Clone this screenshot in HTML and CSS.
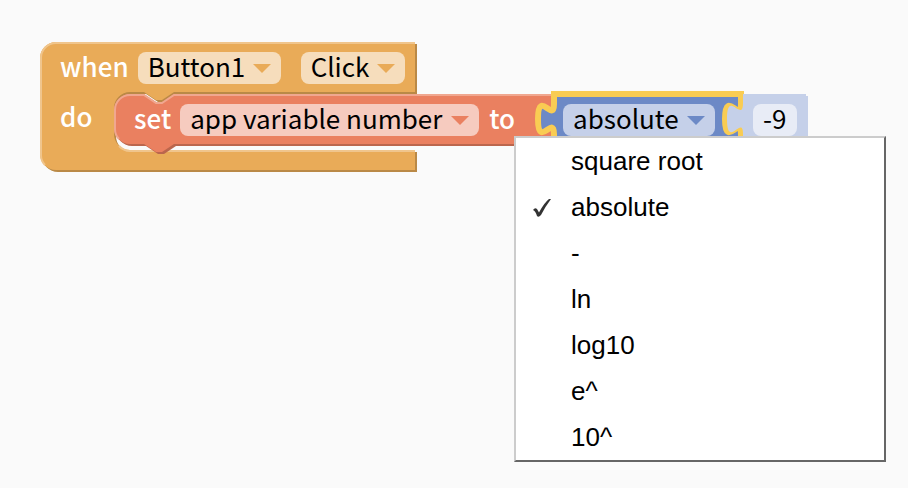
FILE: index.html
```html
<!DOCTYPE html>
<html lang="en">
<head>
<meta charset="utf-8">
<title>Blocks</title>
<link rel="stylesheet" href="styles.css">
</head>
<body>
<main class="workspace">
  <div class="stack">
    <svg class="shapes" viewBox="40 42 768 130" aria-hidden="true">
      <defs>
        <path id="event" d="M40 58 A16 16 0 0 1 56 42 H415 V92 H174 l-12 8 h-6 l-12 -8 H130 A16 16 0 0 0 114 108 V134 A16 16 0 0 0 130 150 H415 V170 H56 A16 16 0 0 1 40 154 Z"/>
        <path id="set" d="M114 110 A16 16 0 0 1 130 94 H144 l12 8 h6 l12 -8 H554 V144 H174 l-12 8 h-6 l-12 -8 H130 A16 16 0 0 1 114 128 Z"/>
      </defs>
      <use href="#event" x="2" y="2" fill="#ba8946"/>
      <use href="#event" fill="#e9ab58"/>
      <path class="edge event-edge" d="M45 165 A15 15 0 0 1 41 154 V58 A15 15 0 0 1 56 43 H415 M119 146 A16 16 0 0 0 130 151 H415"/>
      <use href="#set" x="2" y="2" fill="#bb664d"/>
      <use href="#set" fill="#ea8060"/>
      <path class="edge set-edge" d="M119 139 A15 15 0 0 1 115 128 V110 A15 15 0 0 1 130 95 H144 l12 8 h6 l12 -8 H554"/>
      <path class="math" d="M554 94 H741 V104 c0 20 -16 -16 -16 15 s16 -5 16 15 V144 H554 V134 c0 -20 -16 16 -16 -15 s16 5 16 -15 Z"/>
      <path fill="#c5d0e9" d="M743 94 H806 V96 H808 V144 H743 V134 c0 -20 -16 16 -16 -15 c0 -31 16 5 16 -16 Z"/>
    </svg>
    <div class="row event-row">
      <label for="component">when</label>
      <span class="field event-field">
        <select id="component"><option>Button1</option></select>
        <svg class="arrow" viewBox="0 0 18 9" aria-hidden="true"><path d="M0 0H18L9 9Z"/></svg>
      </span>
      <span class="field event-field click-field">
        <select aria-label="Event"><option>Click</option></select>
        <svg class="arrow" viewBox="0 0 18 9" aria-hidden="true"><path d="M0 0H18L9 9Z"/></svg>
      </span>
    </div>
    <div class="row">
      <span class="do">do</span>
      <label for="variable">set</label>
      <span class="field set-field">
        <select id="variable"><option>app variable number</option></select>
        <svg class="arrow" viewBox="0 0 18 9" aria-hidden="true"><path d="M0 0H18L9 9Z"/></svg>
      </span>
      <label class="to" for="value">to</label>
      <div class="operation">
        <button class="field math-field" type="button" aria-haspopup="listbox" aria-expanded="true">
          <span class="choice">absolute</span>
          <svg class="arrow" viewBox="0 0 18 9" aria-hidden="true"><path d="M0 0H18L9 9Z"/></svg>
        </button>
        <ul class="menu" role="listbox" aria-label="Operation">
          <li role="option" aria-selected="false">square root</li>
          <li role="option" aria-selected="true"><svg class="check" viewBox="0 0 18 20" aria-hidden="true"><path d="M0 12 Q2 9 4 11 L6 14.500 Q11 5 16 1 L18 1 Q12 9 8 17 Q5.500 20 4 18 Q2.500 13 0 12Z"/></svg>absolute</li>
          <li role="option" aria-selected="false">-</li>
          <li role="option" aria-selected="false">ln</li>
          <li role="option" aria-selected="false">log10</li>
          <li role="option" aria-selected="false">e^</li>
          <li role="option" aria-selected="false">10^</li>
        </ul>
      </div>
      <input class="number" id="value" type="text" value="-9">
    </div>
  </div>
</main>
</body>
</html>
```
FILE: styles.css
```css
* { box-sizing: border-box; }

body {
  margin: 0;
  background: #fafafa;
  font: 26px/32px "Noto Sans CJK SC", "Noto Sans", sans-serif;
  color: #000;
}

.workspace {
  min-height: 100vh;
  padding: 42px 40px;
}

.stack {
  position: relative;
  width: max-content;
}

.shapes {
  position: absolute;
  top: 0;
  left: 0;
  width: 768px;
  height: 130px;
  overflow: visible;
}

.edge { fill: none; stroke-width: 2; }
.event-edge { stroke: #f0c58c; }
.set-edge { stroke: #f0a78f; }
.math { fill: #6c89c6; stroke: #f9cc53; stroke-width: 6; }

.row {
  position: relative;
  display: flex;
  align-items: center;
  height: 52px;
  padding-left: 20px;
}

.row label, .do { color: #fff; font-weight: 500; }
.row label { padding-bottom: 4px; }
.do { width: 74px; padding-bottom: 8px; }

.field {
  display: flex;
  align-items: center;
  gap: 8px;
  height: 32px;
  margin-left: 9px;
  padding: 0 10px;
  border: 0;
  border-radius: 8px;
  font: inherit;
  color: inherit;
}

.field select {
  appearance: none;
  padding: 0 0 4px;
  border: 0;
  background: none;
  font: inherit;
  color: inherit;
}

.choice { padding-bottom: 4px; }

.event-field { gap: 7px; background: #f6ddbc; }
.click-field { margin-left: 20px; }
.set-field { background: #f6cbbf; }
.math-field { margin-left: 48px; background: #c5d0e9; }

.arrow { width: 18px; height: 9px; }
.event-field .arrow { fill: #e9ab58; }
.set-field .arrow { fill: #ea8060; }
.math-field .arrow { fill: #6c89c6; }

.to { margin-left: 10px; }

.operation { position: relative; }

.number {
  width: 44px;
  height: 32px;
  margin-left: 38px;
  padding: 0 0 4px;
  border: 0;
  border-radius: 8px;
  background: #e8ecf6;
  font: inherit;
  text-align: center;
}

.menu {
  position: absolute;
  top: 32px;
  left: -1px;
  width: 372px;
  margin: 0;
  padding: 0;
  border: 2px solid;
  border-color: #ccc #666 #666 #ccc;
  background: #fff;
  font: 26px/46px "Liberation Sans", Arial, sans-serif;
  list-style: none;
}

.menu li {
  position: relative;
  height: 46px;
  padding-left: 55px;
}

.check {
  position: absolute;
  left: 17px;
  top: 14px;
  width: 18px;
  height: 20px;
  fill: #333;
}
```
